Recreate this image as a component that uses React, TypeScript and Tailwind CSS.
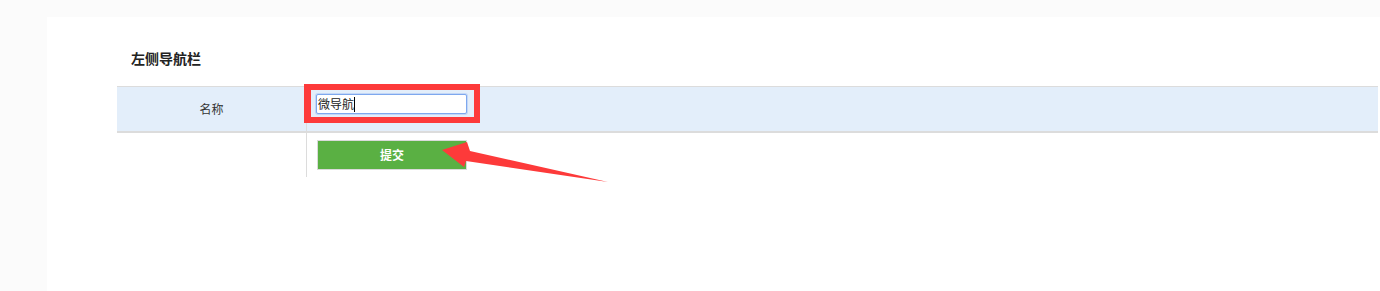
import React from 'react';

const font = { fontFamily: '"Noto Sans CJK SC", "Liberation Sans", sans-serif' };

function Annotation() {
  return (
    <>
      {/* red highlight box round the input */}
      <div className="absolute left-[304px] top-[84px] w-[176px] h-[39px] border-[6px] border-l-[7px] border-[#fd3a3a] pointer-events-none" />
      {/* arrow pointing at the submit button */}
      <svg className="absolute left-0 top-0 pointer-events-none" width="1380" height="291" viewBox="0 0 1380 291">
        <polygon points="442,150 467,142 470,151 608,182 466,161 464,167" fill="#fd3a3a" />
      </svg>
    </>
  );
}

export default function App() {
  return (
    <div className="relative min-h-[291px] bg-[#fbfbfb] pt-[17px] pl-[47px]" style={font}>
      <div className="bg-white h-[274px] pl-[70px] pr-[2px]">
        <div className="h-[69px] pt-[31px] pl-[14px]">
          <h3 className="text-[14px] leading-[20px] font-semibold text-[#222]">左侧导航栏</h3>
        </div>

        <div className="bg-[#e3eefa] border-t border-b-2 border-[#dcdcdc] flex h-[47px]">
          <div className="w-[190px] shrink-0 border-r border-[#dcdcdc] flex items-center justify-center text-[12px] text-[#333]">
            名称
          </div>
          <div className="flex-1 pl-[9px] pt-[7px]">
            <div className="w-[151px] h-[20px] bg-white border border-[#7ea8ee] rounded-[2px] shadow-[0_0_0_1px_#c3d7f7] flex items-center pl-[1px] text-[12px] leading-none text-[#222]">
              微导航<span className="inline-block w-px h-[15px] bg-black" />
            </div>
          </div>
        </div>

        <div className="flex h-[44px]">
          <div className="w-[190px] shrink-0 border-r border-[#dcdcdc]" />
          <div className="flex-1 pl-[10px] pt-[7px]">
            <button className="w-[150px] h-[30px] bg-[#5ab043] border border-[#dadada] text-white text-[12px] font-bold">
              提交
            </button>
          </div>
        </div>
      </div>
      <Annotation />
    </div>
  );
}
